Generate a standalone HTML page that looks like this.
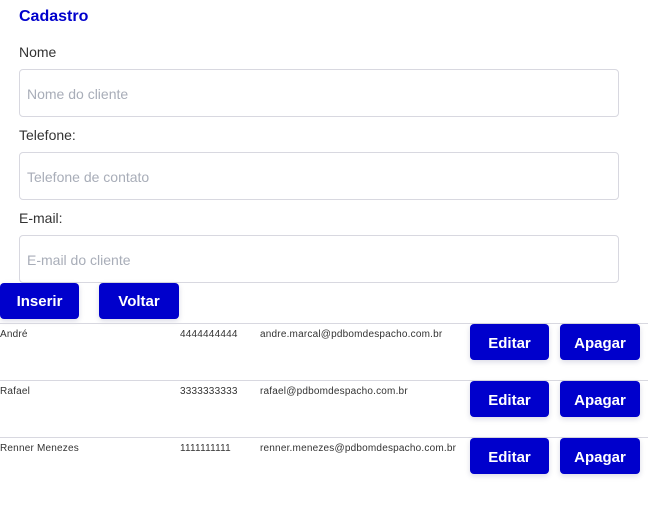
<!DOCTYPE html>
<html><head><style>
body{margin:0;background:#fff;font-family:"Liberation Sans",sans-serif;color:#222;}
h1{position:absolute;left:19px;top:8px;margin:0;font-size:16px;font-weight:bold;color:#0000cc;}
.lbl{position:absolute;left:19px;font-size:14px;color:#333}
.inp{position:absolute;left:19px;border:1px solid #d8d8e0;border-radius:4px;font-size:14px;color:#a8adb8;line-height:48px;padding-left:7px;box-sizing:border-box;width:600px;height:48px}
.btn{position:absolute;background:#0000cc;color:#fff;font-weight:bold;font-size:15px;border-radius:4px;text-align:center;box-shadow:0 2px 6px rgba(0,0,80,0.15);height:36px;line-height:38px}
.line{position:absolute;left:0;width:648px;height:1px;background:#d8d8e0}
.cell{position:absolute;font-size:10px;color:#333;letter-spacing:0.2px}
</style></head><body>
<h1>Cadastro</h1>
<div class="lbl" style="top:44px">Nome</div>
<div class="inp" style="top:69px">Nome do cliente</div>
<div class="lbl" style="top:127px">Telefone:</div>
<div class="inp" style="top:152px">Telefone de contato</div>
<div class="lbl" style="top:210px">E-mail:</div>
<div class="inp" style="top:235px">E-mail do cliente</div>
<div class="btn" style="left:0;top:283px;width:79px">Inserir</div>
<div class="btn" style="left:99px;top:283px;width:80px">Voltar</div>

<div class="line" style="top:323px"></div>
<div class="cell" style="left:0;top:329px">André</div>
<div class="cell" style="left:180px;top:329px">4444444444</div>
<div class="cell" style="left:260px;top:329px">andre.marcal@pdbomdespacho.com.br</div>
<div class="btn" style="left:470px;top:324px;width:79px;line-height:40px">Editar</div>
<div class="btn" style="left:560px;top:324px;width:80px;line-height:40px">Apagar</div>

<div class="line" style="top:380px"></div>
<div class="cell" style="left:0;top:386px">Rafael</div>
<div class="cell" style="left:180px;top:386px">3333333333</div>
<div class="cell" style="left:260px;top:386px">rafael@pdbomdespacho.com.br</div>
<div class="btn" style="left:470px;top:381px;width:79px;line-height:40px">Editar</div>
<div class="btn" style="left:560px;top:381px;width:80px;line-height:40px">Apagar</div>

<div class="line" style="top:437px"></div>
<div class="cell" style="left:0;top:443px">Renner Menezes</div>
<div class="cell" style="left:180px;top:443px">1111111111</div>
<div class="cell" style="left:260px;top:443px">renner.menezes@pdbomdespacho.com.br</div>
<div class="btn" style="left:470px;top:438px;width:79px;line-height:40px">Editar</div>
<div class="btn" style="left:560px;top:438px;width:80px;line-height:40px">Apagar</div>
</body></html>
